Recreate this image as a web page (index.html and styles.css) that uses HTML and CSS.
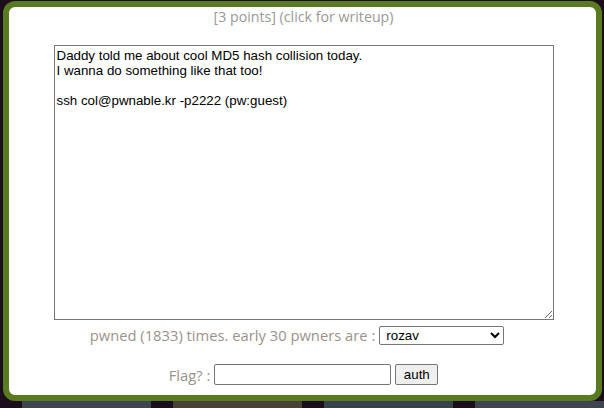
FILE: index.html
```html
<!DOCTYPE html>
<html>
<head>
<meta charset="utf-8">
<link rel="stylesheet" href="styles.css">
</head>
<body>
<div class="modal">
  <div class="title">[3 points] (click for writeup)</div>
  <textarea class="desc" readonly>Daddy told me about cool MD5 hash collision today.
I wanna do something like that too!

ssh col@pwnable.kr -p2222 (pw:guest)</textarea>
  <div class="row pwned">
    <span>pwned (1833) times. early 30 pwners are :</span>
    <select class="pwners"><option>rozav</option></select>
  </div>
  <div class="row flag">
    <span>Flag? :</span>
    <input class="flag-input" type="text">
    <button class="auth">auth</button>
  </div>
</div>
<div class="tiles">
  <div class="tile t1"></div>
  <div class="tile t2"></div>
  <div class="tile t3"></div>
  <div class="tile t4"></div>
</div>
</body>
</html>
```
FILE: styles.css
```css
html, body {
  margin: 0;
  padding: 0;
  background: #1c0d1c;
  height: 408px;
  overflow: hidden;
}
.modal {
  box-sizing: border-box;
  margin: 1px 2px 0 3px;
  height: 400px;
  border: 6px solid #5a7a22;
  border-radius: 12px;
  background: #fff;
  display: flex;
  flex-direction: column;
  align-items: center;
  font-family: "Open Sans", sans-serif;
  color: #9a938c;
}
.title {
  font-size: 14.2px;
  line-height: 20px;
  margin-top: 0;
  margin-left: 2px;
  color: #999;
}
.desc {
  box-sizing: border-box;
  width: 500px;
  height: 275px;
  margin: 18px 0 0 2px;
  border: 1px solid #767676;
  padding: 2px;
  font-family: "Liberation Sans", Arial, sans-serif;
  font-size: 13.33px;
  line-height: 15px;
  color: #000;
  resize: both;
  outline: none;
}
.row {
  display: flex;
  align-items: center;
  font-size: 14.75px;
}
.pwned {
  margin-top: 5px;
  gap: 4px;
  padding-right: 11px;
}
.pwners {
  box-sizing: border-box;
  width: 125px;
  height: 19px;
  font-family: "Liberation Sans", Arial, sans-serif;
  font-size: 13.33px;
  border: 1px solid #767676;
  border-radius: 2px;
  background: #fff;
  color: #000;
  padding: 0 2px;
}
.flag {
  margin-top: 19px;
  gap: 4px;
  padding-left: 2px;
}
.flag-input {
  box-sizing: border-box;
  width: 177px;
  height: 21px;
  border: 1px solid #767676;
  border-radius: 2px;
  margin: 0;
}
.auth {
  box-sizing: border-box;
  width: 43px;
  height: 21px;
  margin: 0;
  border: 1px solid #767676;
  border-radius: 2px;
  background: #efefef;
  font-family: "Liberation Sans", Arial, sans-serif;
  font-size: 13.33px;
  color: #000;
  padding: 0;
}
.tiles {
  display: flex;
  gap: 22px;
  padding-left: 22px;
  height: 8px;
}
.tile {
  width: 152px;
  height: 8px;
  background: #3d4650;
}
.t2 { background: #4a4036; }
.t3 { background: #38424c; }
```
